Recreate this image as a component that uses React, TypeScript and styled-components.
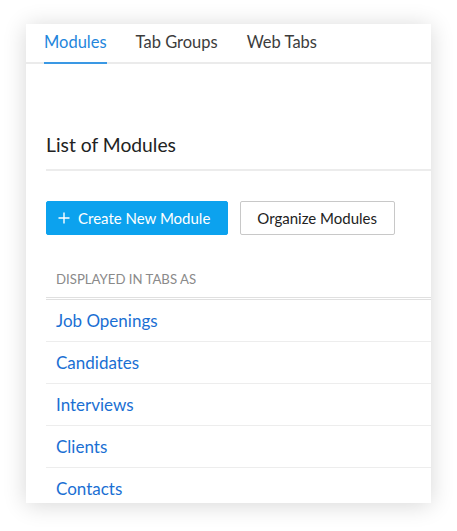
import styled, { createGlobalStyle } from 'styled-components';

const GlobalStyle = createGlobalStyle`
  body {
    margin: 0;
    background: #ffffff;
    font-family: 'Lato', 'Liberation Sans', Arial, sans-serif;
  }
`;

const Page = styled.div`
  padding: 24px 26px 28px 26px;
`;

const Card = styled.div`
  width: 405px;
  height: 479px;
  background: #ffffff;
  box-shadow: 0 2px 22px rgba(0, 0, 0, 0.16);
  overflow: hidden;
  display: flex;
  flex-direction: column;
`;

const TabBar = styled.div`
  flex-shrink: 0;
  display: flex;
  gap: 29px;
  padding: 0 18px;
  height: 38px;
  border-bottom: 2px solid #ebebeb;
`;

const Tab = styled.div<{ active?: boolean }>`
  display: flex;
  align-items: center;
  font-size: 16.5px;
  color: ${(props) => (props.active ? '#2386dc' : '#3c3c3c')};
  margin-bottom: -2px;
  border-bottom: 2px solid
    ${(props) => (props.active ? '#3a98e4' : 'transparent')};
  padding-bottom: 3px;
`;

const Content = styled.div`
  flex-shrink: 0;
  padding-left: 20px;
  display: flex;
  flex-direction: column;
`;

const Title = styled.h2`
  margin: 67px 0 0 0;
  padding-bottom: 10px;
  font-size: 19.3px;
  font-weight: 400;
  color: #222;
  border-bottom: 2px solid #ececec;
  line-height: 28px;
`;

const Actions = styled.div`
  display: flex;
  gap: 12px;
  margin-top: 30px;
`;

const Button = styled.button<{ primary?: boolean }>`
  height: 34px;
  display: flex;
  align-items: center;
  gap: 8px;
  padding: 0 17px 0 ${(props) => (props.primary ? '11px' : '16px')};
  font-family: inherit;
  font-size: 15px;
  border-radius: 2px;
  cursor: pointer;
  background: ${(props) => (props.primary ? '#0ca2ee' : '#ffffff')};
  color: ${(props) => (props.primary ? '#ffffff' : '#222')};
  border: 1px solid ${(props) => (props.primary ? '#0ca2ee' : '#c8c8c8')};
`;

const TableHead = styled.div`
  margin-top: 34px;
  padding: 0 10px 8px 10px;
  font-size: 13.2px;
  color: #8a8a8a;
  text-transform: uppercase;
  border-bottom: 3px double #e0e0e0;
  line-height: 20px;
`;

const Row = styled.div`
  height: 41px;
  display: flex;
  align-items: center;
  padding-left: 10px;
  font-size: 17px;
  color: #1a6fd3;
  border-bottom: 1px solid #ededed;
`;

const PlusIcon = () => (
  <svg width="12" height="12" viewBox="0 0 12 12">
    <path d="M6 0.5v11M0.5 6h11" stroke="#fff" strokeWidth="1.4" fill="none" />
  </svg>
);

const modules = ['Job Openings', 'Candidates', 'Interviews', 'Clients', 'Contacts'];

export default function App() {
  return (
    <>
      <GlobalStyle />
      <Page>
        <Card>
          <TabBar>
            <Tab active>Modules</Tab>
            <Tab>Tab Groups</Tab>
            <Tab>Web Tabs</Tab>
          </TabBar>
          <Content>
            <Title>List of Modules</Title>
            <Actions>
              <Button primary>
                <PlusIcon />
                Create New Module
              </Button>
              <Button>Organize Modules</Button>
            </Actions>
            <TableHead>Displayed in tabs as</TableHead>
            {modules.map((name) => (
              <Row key={name}>{name}</Row>
            ))}
          </Content>
        </Card>
      </Page>
    </>
  );
}
